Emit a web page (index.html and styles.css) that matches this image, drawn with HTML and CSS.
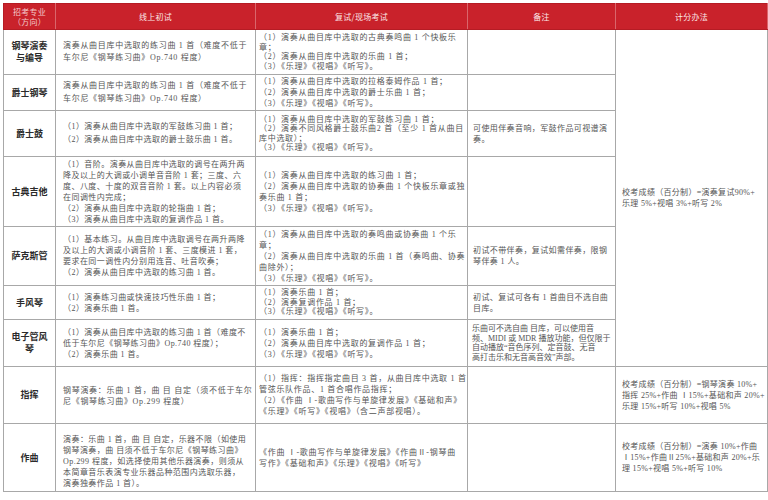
FILE: index.html
```html
<!DOCTYPE html>
<html lang="zh">
<head>
<meta charset="utf-8">
<title>招考专业</title>
<link rel="stylesheet" href="styles.css">
</head>
<body>
<table class="exam">
  <colgroup>
    <col class="c0"><col class="c1"><col class="c2"><col class="c3"><col class="c4">
  </colgroup>
  <thead>
    <tr class="hd">
      <th class="hd-first">招考专业<br>（方向）</th>
      <th>线上初试</th>
      <th>复试/现场考试</th>
      <th>备注</th>
      <th>计分办法</th>
    </tr>
  </thead>
  <tbody>
    <tr class="r1">
      <td class="lbl">钢琴演奏与编导</td>
      <td class="t1 wide loose">演奏从曲目库中选取的练习曲 1 首（难度不低于<br>车尔尼《钢琴练习曲》Op.740 程度）</td>
      <td class="t2 tight">（1）演奏从曲目库中选取的古典奏鸣曲 1 个快板乐<br>章；<br>（2）演奏从曲目库中选取的乐曲 1 首；<br>（3）《乐理》《视唱》《听写》。</td>
      <td class="t3"></td>
      <td class="t4" rowspan="7">校考成绩（百分制）=演奏复试90%+<br>乐理 5%+视唱 3%+听写 2%</td>
    </tr>
    <tr class="r2">
      <td class="lbl">爵士钢琴</td>
      <td class="t1 wide loose">演奏从曲目库中选取的练习曲 1 首（难度不低于<br>车尔尼《钢琴练习曲》Op.740 程度）</td>
      <td class="t2">（1）演奏从曲目库中选取的拉格泰姆作品 1 首；<br>（2）演奏从曲目库中选取的爵士乐曲 1 首；<br>（3）《乐理》《视唱》《听写》。</td>
      <td class="t3"></td>
    </tr>
    <tr class="r3">
      <td class="lbl">爵士鼓</td>
      <td class="t1 loose">（1）演奏从曲目库中选取的军鼓练习曲 1 首；<br>（2）演奏从曲目库中选取的爵士鼓乐曲 1 首。</td>
      <td class="t2 tight">（1）演奏从曲目库中选取的军鼓练习曲 1 首；<br>（2）演奏不同风格爵士鼓乐曲2 首（至少 1 首从曲目<br>库中选取）；<br>（3）《乐理》《视唱》《听写》。</td>
      <td class="t3">可使用伴奏音响，军鼓作品可视谱演<br>奏。</td>
    </tr>
    <tr class="r4">
      <td class="lbl">古典吉他</td>
      <td class="t1">（1）音阶。演奏从曲目库中选取的调号在两升两<br>降及以上的大调或小调单音音阶 1 套；三度、六<br>度、八度、十度的双音音阶 1 套。以上内容必须<br>在同调性内完成；<br>（2）演奏从曲目库中选取的轮指曲 1 首；<br>（3）演奏从曲目库中选取的复调作品 1 首。</td>
      <td class="t2">（1）演奏从曲目库中选取的练习曲 1 首；<br>（2）演奏从曲目库中选取的协奏曲 1 个快板乐章或独<br>奏乐曲 1 首；<br>（3）《乐理》《视唱》《听写》。</td>
      <td class="t3"></td>
    </tr>
    <tr class="r5">
      <td class="lbl">萨克斯管</td>
      <td class="t1">（1）基本练习。从曲目库中选取调号在两升两降<br>及以上的大调或小调音阶 1 套、三度模进 1 套，<br>要求在同一调性内分别用连音、吐音吹奏；<br>（2）演奏从曲目库中选取的练习曲 1 首。</td>
      <td class="t2">（1）演奏从曲目库中选取的奏鸣曲或协奏曲 1 个乐<br>章；<br>（2）演奏从曲目库中选取的乐曲 1 首（奏鸣曲、协奏<br>曲除外）；<br>（3）《乐理》《视唱》《听写》。</td>
      <td class="t3">初试不带伴奏，复试如需伴奏，限钢<br>琴伴奏 1 人。</td>
    </tr>
    <tr class="r6">
      <td class="lbl">手风琴</td>
      <td class="t1">（1）演奏练习曲或快速技巧性乐曲 1 首；<br>（2）演奏乐曲 1 首。</td>
      <td class="t2 tight">（1）演奏乐曲 1 首；<br>（2）演奏复调作品 1 首；<br>（3）《乐理》《视唱》《听写》。</td>
      <td class="t3">初试、复试可各有 1 首曲目不选自曲<br>目库。</td>
    </tr>
    <tr class="r7">
      <td class="lbl">电子管风琴</td>
      <td class="t1">（1）演奏从曲目库中选取的练习曲 1 首（难度不<br>低于车尔尼《钢琴练习曲》Op.740 程度）；<br>（2）演奏乐曲 1 首。</td>
      <td class="t2">（1）演奏乐曲 1 首；<br>（2）演奏从曲目库中选取的复调作品 1 首；<br>（3）《乐理》《视唱》《听写》。</td>
      <td class="t3 tight dense">乐曲可不选自曲 目库，可以使用音<br>频、MIDI 或 MDR 播放功能，但仅限于<br>自动播放“音色序列、定音鼓、无音<br>高打击乐和无音高音效”声部。</td>
    </tr>
    <tr class="r8">
      <td class="lbl">指挥</td>
      <td class="t1 wide top">钢琴演奏：乐曲 1 首，曲 目 自定（须不低于车尔<br>尼《钢琴练习曲》Op.299 程度）</td>
      <td class="t2">（1）指挥：指挥指定曲目 3 首，从曲目库中选取 1 首<br>管弦乐队作品、1 首合唱作品指挥；<br>（2）《作曲 Ⅰ-歌曲写作与单旋律发展》《基础和声》<br>《乐理》《听写》《视唱》（含二声部视唱）。</td>
      <td class="t3"></td>
      <td class="t4">校考成绩（百分制）=钢琴演奏 10%+<br>指挥 25%+作曲 Ⅰ15%+基础和声 20%+<br>乐理 15%+听写 10%+视唱 5%</td>
    </tr>
    <tr class="r9">
      <td class="lbl">作曲</td>
      <td class="t1 low">演奏：乐曲 1 首，曲 目 自定，乐器不限（如使用<br>钢琴演奏，曲 目须不低于车尔尼《钢琴练习曲》<br>Op.299 程度，如选择使用其他乐器演奏，则须从<br>本简章音乐表演专业乐器品种范围内选取乐器，<br>演奏独奏作品 1 首）。</td>
      <td class="t2">《作曲 Ⅰ-歌曲写作与单旋律发展》《作曲Ⅱ-钢琴曲<br>写作》《基础和声》《乐理》《视唱》《听写》</td>
      <td class="t3"></td>
      <td class="t4">校考成绩（百分制）=演奏 10%+作曲<br>Ⅰ15%+作曲Ⅱ25%+基础和声 20%+乐<br>理 15%+视唱 5%+听写 10%</td>
    </tr>
  </tbody>
</table>
</body>
</html>
```

FILE: styles.css
```css
html, body {
  margin: 0;
  padding: 0;
  background: #ffffff;
}

body {
  font-family: "Liberation Serif", "Noto Sans CJK SC", serif;
}

.exam {
  margin: 3px 0 0 3px;
  width: 764px;
  table-layout: fixed;
  border-collapse: collapse;
  border: 1px solid #a8a8a8;
}

.c0 { width: 52px; }
.c1 { width: 200px; }
.c2 { width: 212px; }
.c3 { width: 148px; }
.c4 { width: 152px; }

.hd { height: 26px; }

.hd th {
  background: #c9222b;
  color: #fbe9e9;
  font-family: "Noto Sans CJK SC", sans-serif;
  font-weight: normal;
  font-size: 8px;
  line-height: 10px;
  letter-spacing: 0.3px;
  padding: 0;
  text-align: center;
  vertical-align: middle;
  border: 1px solid #b51c24;
  border-right-color: #d9666b;
}

.hd .hd-first {
  color: #f3c8ca;
}

.exam td {
  border: 1px solid #a8a8a8;
  padding: 0;
  vertical-align: middle;
  white-space: nowrap;
  color: #555555;
  font-size: 8px;
  line-height: 11px;
  letter-spacing: 0.3px;
  overflow: hidden;
}

.exam td.lbl {
  text-align: center;
  white-space: normal;
  padding: 0 5px;
  color: #2b2b2b;
  font-family: "Noto Sans CJK SC", sans-serif;
  font-weight: bold;
  font-size: 9px;
  line-height: 12px;
  letter-spacing: 0;
}

.exam td.t1 { padding-left: 7px; letter-spacing: 0.45px; }
.exam td.t2 { padding-left: 3px; letter-spacing: 0.7px; }
.exam td.t3 { padding-left: 5px; letter-spacing: 0.4px; }
.exam td.t4 { padding-left: 6px; letter-spacing: 0.3px; }

.exam td.wide { letter-spacing: 0.7px; }
.exam td.dense { padding-left: 4px; letter-spacing: 0; }

.exam td.loose { line-height: 12.5px; }
.exam td.tight { line-height: 9.5px; }
.exam td.top { vertical-align: top; padding-top: 18px; }
.exam td.low { padding-top: 8px; }

.r1 { height: 45px; }
.r2 { height: 36px; }
.r3 { height: 46px; }
.r4 { height: 70px; }
.r5 { height: 59px; }
.r6 { height: 34px; }
.r7 { height: 47px; }
.r8 { height: 57px; }
.r9 { height: 68px; }
```
